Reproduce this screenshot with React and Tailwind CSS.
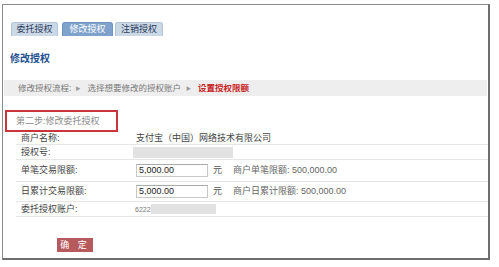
import React from "react";

const F = { fontFamily: '"Liberation Sans", "Noto Sans CJK SC", sans-serif' };

function Row({ h, label, children }) {
  return (
    <div className={`flex items-center border-b border-[#e6e6e6] ${h}`}>
      <div className="w-[120px] shrink-0 pl-[5px] text-[9px] leading-none text-[#444]">{label}</div>
      <div className="flex items-center text-[9px] leading-none text-[#444]">{children}</div>
    </div>
  );
}

export default function App() {
  return (
    <div className="w-[499px] h-[267px] bg-white pt-[4px] pl-[2px] overflow-hidden" style={F}>
      <div className="w-[488px] h-[256px] border-l border-t border-[#8a8a8a] border-r-2 border-b-2 border-r-[#6e6e6e] border-b-[#6e6e6e] flex flex-col">
        {/* tabs */}
        <div className="flex mt-[17px] ml-[8px] h-[14px]">
          <div className="w-[47px] h-[14px] rounded-t-[3px] bg-[#cbd8e6] border border-[#b3c4d8] border-b-0 flex items-center justify-center text-[9px] leading-none text-[#2a3b5c]">委托授权</div>
          <div className="w-[51px] h-[14px] ml-[4px] rounded-t-[3px] bg-[#7fa2cd] border border-[#6f93c0] border-b-0 flex items-center justify-center text-[9px] leading-none text-white">修改授权</div>
          <div className="w-[48px] h-[14px] ml-[2px] rounded-t-[3px] bg-[#cbd8e6] border border-[#b3c4d8] border-b-0 flex items-center justify-center text-[9px] leading-none text-[#2a3b5c]">注销授权</div>
        </div>
        {/* title */}
        <div className="mt-[17px] ml-[7px] h-[12px] flex items-center text-[10px] leading-none font-bold text-[#23508f]">修改授权</div>
        {/* breadcrumb */}
        <div className="mt-[15px] ml-[1px] mr-[1px] h-[16px] bg-[#eeeeee] flex items-center pl-[14px] text-[8.5px] leading-none text-[#777]">
          <span>修改授权流程:</span>
          <span className="ml-[4px] text-[5px] text-[#999]">▶</span>
          <span className="ml-[7px]">选择想要修改的授权账户</span>
          <span className="ml-[5px] text-[5px] text-[#999]">▶</span>
          <span className="ml-[7px] font-bold text-[#c8231e]">设置授权限额</span>
        </div>
        {/* step */}
        <div className="mt-[14px] ml-[2px] w-[113px] h-[22px] border-2 border-[#c9353a] flex items-center pl-[9px] text-[9px] leading-none text-[#8a8a8a]">第二步:修改委托授权</div>
        {/* rows */}
        <div className="ml-[13px] flex flex-col">
          <Row h="h-[13px]" label="商户名称:">支付宝（中国）网络技术有限公司</Row>
          <Row h="h-[15px]" label="授权号:">
            <div className="w-[100px] h-[11px] bg-[#e2e2e2] -ml-[3px]" />
          </Row>
          <Row h="h-[22px]" label="单笔交易限额:">
            <div className="w-[72px] h-[13px] border border-[#c8c8c8] border-t-[#a8a8a8] flex items-center pl-[2px] text-[9px] text-[#222]">5,000.00</div>
            <span className="ml-[5px] text-[#555]">元</span>
            <span className="ml-[11px] text-[#666]">商户单笔限额: 500,000.00</span>
          </Row>
          <Row h="h-[20px]" label="日累计交易限额:">
            <div className="w-[72px] h-[13px] border border-[#c8c8c8] border-t-[#a8a8a8] flex items-center pl-[2px] text-[9px] text-[#222]">5,000.00</div>
            <span className="ml-[5px] text-[#555]">元</span>
            <span className="ml-[11px] text-[#666]">商户日累计限额: 500,000.00</span>
          </Row>
          <Row h="h-[15px]" label="委托授权账户:">
            <span className="-ml-[1px] text-[7px] text-[#777]">6222</span>
            <div className="w-[65px] h-[10px] bg-[#e2e2e2]" />
          </Row>
        </div>
        {/* button */}
        <div className="mt-[21px] ml-[54px] w-[36px] h-[14px] bg-[#b75a5d] flex items-center justify-center text-[9px] leading-none text-white tracking-[3px]">确 定</div>
      </div>
    </div>
  );
}
